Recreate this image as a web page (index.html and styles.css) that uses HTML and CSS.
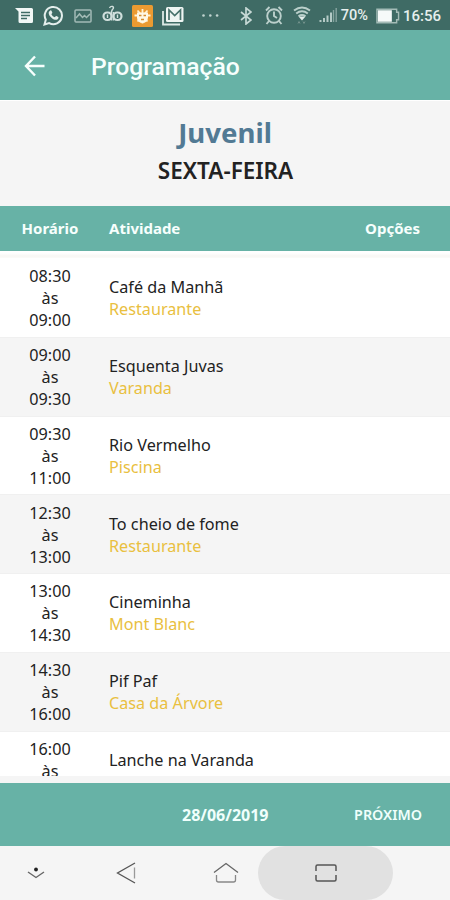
FILE: index.html
```
<!DOCTYPE html>
<html lang="pt-BR">
<head>
    <meta charset="UTF-8">
    <title>Programação</title>
    <meta name="viewport" content="width=device-width, initial-scale=1.0">
    <link rel="stylesheet" href="styles.css">
</head>
<body>
    <div class="status-bar">
        <div class="status-icons">
            <svg width="18" height="16" viewBox="0 0 18 16">
                <path fill="#f2f7f6" d="M0 0h16.500a1.500 1.500 0 0 1 1.500 1.500v12a1.500 1.500 0 0 1-1.500 1.500H5a1.500 1.500 0 0 1-1.500-1.500V3.500z"/>
                <path stroke="#3f6b65" stroke-width="1.500" d="M6 4.500h9M6 7.500h9M6 10.500h6"/>
            </svg>
            <svg width="21" height="21" viewBox="0 0 21 21">
                <path fill="none" stroke="#e4eeec" stroke-width="2" d="M1.500 19.500l1.300-4.800a8.600 8.600 0 1 1 3.400 3.400z"/>
                <path fill="#e4eeec" d="M7.300 5.500c.6-.3 1-.2 1.300.5l.7 1.600c.2.500-.6 1.200-.9 1.600.8 1.500 1.900 2.500 3.400 3.100.6-.5 1-1.500 1.600-1.200l1.900.9c.6.400-.1 2-1 2.500-1.400.8-3.500.1-5.300-1.300-2.200-1.700-3.500-3.900-3.300-5.400.1-1 .8-1.900 1.600-2.300z"/>
            </svg>
            <svg width="18" height="14" viewBox="0 0 18 14" fill="none" stroke="#a3bbb6" stroke-width="1.500">
                <rect x="1" y="1" width="16" height="12" rx="1"/>
                <path d="M2 9l3.500-4 3 3.500 2-2 2 2L16 5"/>
            </svg>
            <svg class="mask" width="21" height="18" viewBox="0 0 21 18" fill="none" stroke="#d0dfdc" stroke-width="2.200">
                <rect x="1.500" y="7.500" width="8" height="7.500" rx="3.700"/>
                <rect x="11.500" y="7.500" width="8" height="7.500" rx="3.700"/>
                <path d="M9.500 6v9.500M11.500 7v8.500" stroke-width="1.500"/>
                <path d="M7.500 3q1-2 3-1.500 2 1 0 3L9.500 6M5.500 9.500v3.500M15.500 9.500v3.500" stroke-width="1.400"/>
            </svg>
            <svg width="21" height="22" viewBox="0 0 21 22">
                <rect width="21" height="22" rx="1.500" fill="#eb9a31"/>
                <path stroke="#fff3d5" stroke-width="1.800" d="M10.500 4v14.500M2.500 10.500h16M5.500 5.500l10 11M15.500 5.500l-10 11"/>
                <path fill="#fff8e6" d="M5 7.500h11v5a5.500 5.500 0 0 1-11 0z"/>
                <path stroke="#d38b30" stroke-width="1.500" d="M7 10.500h2.500M11.500 10.500H14M9 14.500h3"/>
            </svg>
            <svg class="mail" width="22" height="20" viewBox="0 0 22 20">
                <path d="M1 5v13.500h17" fill="none" stroke="#dce9e6" stroke-width="1.800"/>
                <rect x="4" y="1" width="17.500" height="15" rx="1.500" fill="#eff5f3"/>
                <path d="M7 14V4l5.700 5.500L18.500 4v10" fill="none" stroke="#47716b" stroke-width="1.700"/>
            </svg>
            <svg class="more" width="17" height="3" viewBox="0 0 17 3" fill="#c1d4d0">
                <circle cx="1.500" cy="1.500" r="1.300"/>
                <circle cx="8.300" cy="1.500" r="1.300"/>
                <circle cx="15.100" cy="1.500" r="1.300"/>
            </svg>
        </div>
        <div class="status-info">
            <svg class="bluetooth" width="12" height="18" viewBox="0 0 12 18" fill="none" stroke="#c6d8d5" stroke-width="1.700">
                <path d="M1 5l10 8-5 4V1l5 4-10 8"/>
            </svg>
            <svg class="alarm" width="18" height="19" viewBox="0 0 18 19" fill="none" stroke="#bcd0cc" stroke-width="1.900">
                <circle cx="9" cy="10" r="6.800"/>
                <path d="M9 5.500V10l3 2M1 4.500L4.500 1M17 4.500L13.500 1M4 15l-2.500 3M14 15l2.500 3"/>
            </svg>
            <svg class="wifi" width="18" height="19" viewBox="0 0 18 19" fill="none" stroke="#b9cfca" stroke-width="2">
                <path d="M1 4.500q8-6 16 0M3.200 7.500q5.800-4.500 11.600 0M5.500 10.200q3.500-2.500 7 0"/>
                <path d="M5.500 10.500h7L9 14.500z" fill="#e3edeb" stroke="none"/>
                <path d="M5 17.500l1-2 1 2M10 15.500l1 2 1-2" stroke="#72918b" stroke-width="1"/>
            </svg>
            <svg class="signal" width="18" height="15" viewBox="0 0 18 15" stroke-width="2">
                <path stroke="#b4cac6" d="M1.500 12v2M5 10v4M8.500 7.500V14M12 4.500V14"/>
                <path stroke="#86a49f" stroke-width="1.400" d="M14.500 2v12M17.200 0v14"/>
            </svg>
            <span class="percent">70%</span>
            <svg class="battery" width="24" height="16" viewBox="0 0 25 16">
                <path fill="none" stroke="#a4bcb7" stroke-width="1.500" d="M1 1h20.500v3h2v8h-2v3H1z"/>
                <rect x="2" y="2" width="14.500" height="12" fill="#f6faf9"/>
            </svg>
            <span class="clock">16:56</span>
        </div>
    </div>

    <header class="app-bar">
        <svg width="22" height="22" viewBox="0 0 22 22" fill="none" stroke="#f7fffd" stroke-width="2.400">
            <path d="M11 1.500L2 11l9 9.500M2 11h18.500"/>
        </svg>
        <h1>Programação</h1>
    </header>

    <section class="day-title">
        <h2>Juvenil</h2>
        <h3>SEXTA-FEIRA</h3>
    </section>

    <div class="table-head">
        <span class="col-time">Horário</span>
        <span class="col-activity">Atividade</span>
        <span class="col-options">Opções</span>
    </div>

    <main class="schedule">
        <div class="row">
            <div class="time">08:30<br>às<br>09:00</div>
            <div class="activity">Café da Manhã<span class="place">Restaurante</span></div>
        </div>
        <div class="row">
            <div class="time">09:00<br>às<br>09:30</div>
            <div class="activity">Esquenta Juvas<span class="place">Varanda</span></div>
        </div>
        <div class="row">
            <div class="time">09:30<br>às<br>11:00</div>
            <div class="activity">Rio Vermelho<span class="place">Piscina</span></div>
        </div>
        <div class="row">
            <div class="time">12:30<br>às<br>13:00</div>
            <div class="activity">To cheio de fome<span class="place">Restaurante</span></div>
        </div>
        <div class="row">
            <div class="time">13:00<br>às<br>14:30</div>
            <div class="activity">Cineminha<span class="place">Mont Blanc</span></div>
        </div>
        <div class="row">
            <div class="time">14:30<br>às<br>16:00</div>
            <div class="activity">Pif Paf<span class="place">Casa da Árvore</span></div>
        </div>
        <div class="row last">
            <div class="time">16:00<br>às</div>
            <div class="activity">Lanche na Varanda</div>
        </div>
    </main>

    <footer class="pager">
        <span class="date">28/06/2019</span>
        <span class="next">PRÓXIMO</span>
    </footer>

    <nav class="nav-bar">
        <div class="nav-item hide">
            <svg width="18" height="12" viewBox="0 0 18 12">
                <circle cx="9" cy="2.500" r="1.900" fill="#222"/>
                <path d="M1 5l8 5.500L17 5" fill="none" stroke="#666" stroke-width="1.400"/>
            </svg>
        </div>
        <div class="nav-item">
            <svg width="20" height="22" viewBox="0 0 20 22" fill="none" stroke="#555" stroke-width="1.300">
                <path d="M19 1L1.500 11 19 21"/>
                <path d="M18.500 5.500v11" stroke="#999"/>
            </svg>
        </div>
        <div class="nav-item">
            <svg width="26" height="22" viewBox="0 0 26 22" fill="none" stroke="#666" stroke-width="1.300">
                <path d="M1 10.500L13 1.500l12 9"/>
                <path d="M3.500 13v5q0 2 2 2h15q2 0 2-2v-5" stroke="#888"/>
            </svg>
        </div>
        <div class="nav-item active">
            <svg width="22" height="18" viewBox="0 0 22 18" fill="none" stroke="#555" stroke-width="1.500">
                <path d="M1 7V2.500Q1 1 2.500 1h17Q21 1 21 2.500V7M1 11v4.500Q1 17 2.500 17h17q1.500 0 1.500-1.500V11"/>
            </svg>
        </div>
    </nav>
</body>
</html>
```

FILE: styles.css
```
:root {
    --primary: #67b2a6;
    --primary-dark: #3f6b65;
    --bg-color: #f5f5f5;
    --place-color: #e9c03f;
}

* {
    box-sizing: border-box;
}

body {
    margin: 0;
    width: 450px;
    height: 900px;
    display: flex;
    flex-direction: column;
    overflow: hidden;
    background-color: var(--bg-color);
    color: #222;
    font-family: 'Noto Sans', sans-serif;
}

h1, h2, h3 {
    margin: 0;
}

svg {
    display: block;
    flex: none;
}

.status-bar {
    height: 30px;
    flex: none;
    display: flex;
    justify-content: space-between;
    padding: 0 9px 0 15px;
    background-color: var(--primary-dark);
    color: #e6efed;
    font-family: Roboto, sans-serif;
    font-size: 15px;
}

.status-icons,
.status-info {
    display: flex;
    align-items: center;
    padding-top: 1px;
}

.status-icons {
    gap: 10px;
}

.status-icons .mask {
    margin: 0 -1px 4px 0;
}

.status-icons .mail {
    margin-left: -1px;
}

.status-icons .more {
    margin-left: 8px;
}

.percent,
.clock {
    font-weight: 500;
}

.percent {
    font-size: 14.500px;
}

.bluetooth { margin-right: 13px; }
.alarm { margin-right: 10px; }
.wifi { margin-right: 8px; }
.signal { margin-right: 4px; }
.percent { margin-right: 8px; }
.battery { margin-right: 3px; }

.app-bar {
    height: 70px;
    flex: none;
    display: flex;
    align-items: center;
    padding: 1px 24px 0;
    background-color: var(--primary);
}

.app-bar h1 {
    margin: 2px 0 0 45px;
    color: #f7fffd;
    font-family: Roboto, sans-serif;
    font-size: 24.700px;
    font-weight: 500;
}

.day-title {
    height: 106px;
    flex: none;
    padding-top: 13px;
    border-top: 1px solid #fff;
    text-align: center;
}

.day-title h2 {
    font-size: 27.600px;
    line-height: 36px;
    color: #527a94;
}

.day-title h3 {
    padding-left: 1px;
    font-size: 22.500px;
    line-height: 41px;
    font-weight: 600;
}

.table-head {
    height: 45px;
    flex: none;
    display: flex;
    align-items: center;
    padding: 0 30px 2px 0;
    background-color: var(--primary);
    color: #f7fffd;
    font-size: 15px;
    font-weight: 700;
}

.col-time {
    width: 100px;
    text-align: center;
}

.col-activity {
    flex: 1;
    padding-left: 9px;
}

.schedule {
    height: 525px;
    flex: none;
    padding-top: 7px;
    overflow: hidden;
    background: linear-gradient(#fff 2px, #f8f7f4 5px, #fff 9px);
}

.row {
    height: 78.750px;
    display: flex;
    align-items: center;
    padding-top: 1px;
    background-color: #fff;
    font-size: 16.200px;
    line-height: 22px;
}

.row:nth-child(even) {
    background-color: var(--bg-color);
}

.row + .row {
    border-top: 1px solid #f0f0f0;
}

.time {
    width: 100px;
    text-align: center;
}

.activity {
    padding-left: 9px;
}

.place {
    display: block;
    color: var(--place-color);
}

.row.last {
    align-items: flex-start;
    padding-top: 6px;
}

.row.last .activity {
    padding-top: 11px;
}

.pager {
    height: 63px;
    flex: none;
    margin-top: 7px;
    display: flex;
    align-items: center;
    justify-content: space-between;
    padding: 0 28px 0 182px;
    background-color: var(--primary);
    color: #f0fffc;
}

.date {
    font-size: 16px;
    font-weight: 700;
}

.next {
    font-size: 14.300px;
    font-weight: 600;
}

.nav-bar {
    height: 54px;
    flex: none;
    display: flex;
}

.nav-item {
    width: 100px;
    display: flex;
    align-items: center;
    justify-content: center;
}

.nav-item.hide {
    width: 71px;
    margin-right: 5px;
}

.nav-item.active {
    width: 135px;
    margin-left: -18px;
    border-radius: 27px;
    background-color: #e1e1e1;
}
```
